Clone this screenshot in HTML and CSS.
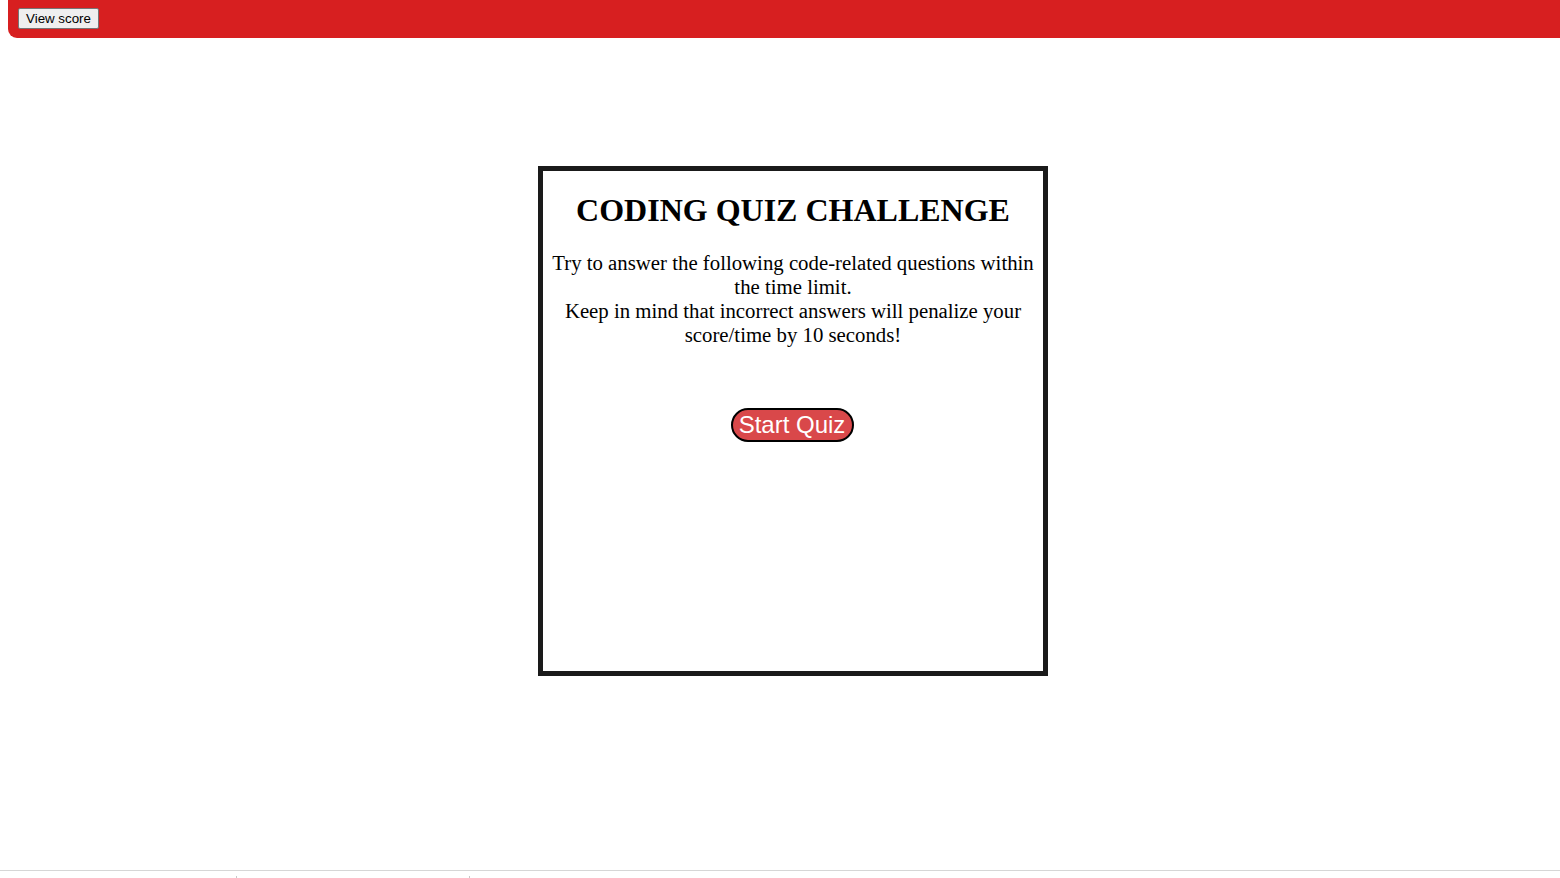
FILE: index.html
```html
<!DOCTYPE html>
<html>
<head>
<meta charset="utf-8">
<title>Coding Quiz</title>
<link rel="stylesheet" href="styles.css">
</head>
<body>
<header class="topbar">
  <button class="view-score">View score</button>
</header>
<main class="stage">
  <section class="card">
    <h1 class="title">CODING QUIZ CHALLENGE</h1>
    <p class="intro">Try to answer the following code-related questions within the time limit.<br>Keep in mind that incorrect answers will penalize your score/time by 10 seconds!</p>
    <button class="start">Start Quiz</button>
  </section>
</main>
<footer class="footer">
  <span class="tick tick-a"></span>
  <span class="tick tick-b"></span>
</footer>
</body>
</html>
```

FILE: styles.css
```css
html {
  margin: 0;
  padding: 0;
  height: 100%;
  overflow: hidden;
  position: relative;
}
body {
  margin: 0 0 0 8px;
  height: 100%;
  font-family: "Liberation Serif", "Times New Roman", serif;
  background: #ffffff;
}
.topbar {
  height: 38px;
  background: #d71f20;
  border-radius: 0 0 0 9px;
  margin-right: -20px;
  padding: 8px 0 0 10px;
  box-sizing: border-box;
}
.view-score {
  font-family: "Liberation Sans", Arial, sans-serif;
  font-size: 13.33px;
  height: 21px;
  width: 81px;
  padding: 0;
  background: #efefef;
  border: 1px solid #767676;
  border-radius: 2px;
  color: #000;
  line-height: 17px;
}
.stage {
  display: flex;
  justify-content: center;
  padding: 128px 0 0 18px;
}
.card {
  width: 500px;
  height: 500px;
  border: 5px solid #1a1a1a;
  text-align: center;
  display: flex;
  flex-direction: column;
  align-items: center;
}
.title {
  margin: 21px 0 0;
  font-size: 32px;
  font-weight: bold;
  line-height: 37px;
}
.intro {
  margin: 22px 6px 0;
  font-size: 20.8px;
  line-height: 24px;
}
.start {
  margin: 61px 2px 0 0;
  font-family: "Liberation Sans", Arial, sans-serif;
  font-size: 24px;
  color: #ffffff;
  background: #d9484a;
  border: 2px solid #000;
  border-radius: 18px;
  width: 123px;
  height: 34px;
  padding: 0;
  line-height: 28px;
}
.footer {
  position: absolute;
  left: 0;
  right: 0;
  top: 870px;
  height: 8px;
  border-top: 1px solid #d6d6d6;
}
.tick {
  position: absolute;
  top: 5px;
  width: 1px;
  height: 3px;
  background: #c8c8c8;
}
.tick-a { left: 236px; }
.tick-b { left: 469px; }
```
